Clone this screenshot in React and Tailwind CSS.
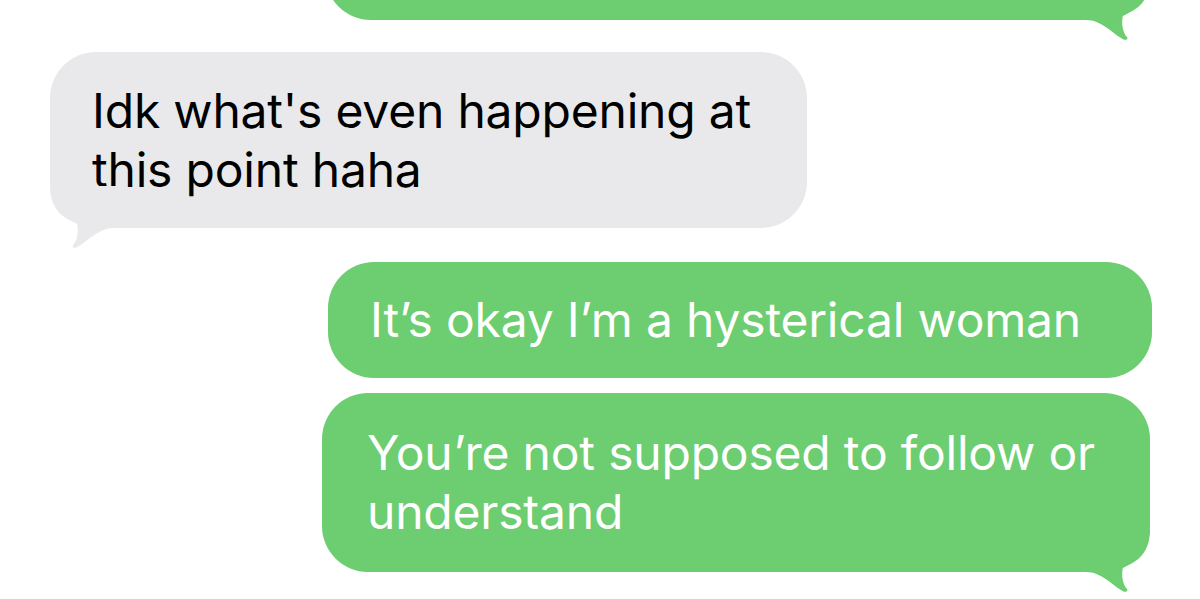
import React from "react";

const GREEN = "#6ccd71";

function TailRight({ color }) {
  return (
    <svg
      width="72"
      height="64"
      viewBox="0 0 72 64"
      className="absolute right-[-2px] bottom-[-22px]"
    >
      <path
        d="M0,0 H70 C70,18 62,31 43,37 C41,46 43,55 47,59 C48.5,61 46,62.5 43.5,61.5 C33,56 22,42 6,42 H0 Z"
        fill={color}
      />
    </svg>
  );
}

function TailLeft({ color }) {
  return (
    <svg
      width="72"
      height="64"
      viewBox="0 0 72 64"
      className="absolute left-[-2px] bottom-[-22px] -scale-x-100"
    >
      <path
        d="M0,0 H70 C70,18 62,31 43,37 C41,46 43,55 47,59 C48.5,61 46,62.5 43.5,61.5 C33,56 22,42 6,42 H0 Z"
        fill={color}
      />
    </svg>
  );
}

export default function App() {
  return (
    <div
      className="w-[1200px] h-[599px] overflow-hidden bg-white flex flex-col"
      style={{ fontFamily: "Inter, 'Noto Sans', sans-serif" }}
    >
      {/* top (cut off) bubble */}
      <div className="self-end mr-[50px] mt-[-80px] relative w-[825px] h-[100px] rounded-[46px] bg-[#6ccd71]">
        <TailRight color={GREEN} />
      </div>

      {/* gray incoming bubble */}
      <div className="self-start ml-[50px] mt-[32px] relative w-[757px] h-[176px] rounded-[46px] bg-[#e9e9eb] pl-[42px] py-[29px] text-[48px] leading-[59px] text-black tracking-[-0.2px]">
        <span className="block whitespace-nowrap">Idk what's even happening at</span>
        <span className="block whitespace-nowrap">this point haha</span>
        <TailLeft color="#e9e9eb" />
      </div>

      {/* green outgoing bubble 1 */}
      <div className="self-end mr-[48px] mt-[34px] relative w-[824px] h-[116px] rounded-[46px] bg-[#6ccd71] pl-[42px] py-[28px] text-[48px] leading-[59px] text-white tracking-[-0.2px]">
        <span className="block whitespace-nowrap">It’s okay I’m a hysterical woman</span>
      </div>

      {/* green outgoing bubble 2 */}
      <div className="self-end mr-[50px] mt-[15px] relative w-[828px] h-[179px] rounded-[46px] bg-[#6ccd71] pl-[45px] py-[30px] text-[48px] leading-[59px] text-white tracking-[-0.2px]">
        <span className="block whitespace-nowrap">You’re not supposed to follow or</span>
        <span className="block whitespace-nowrap">understand</span>
        <TailRight color={GREEN} />
      </div>
    </div>
  );
}
